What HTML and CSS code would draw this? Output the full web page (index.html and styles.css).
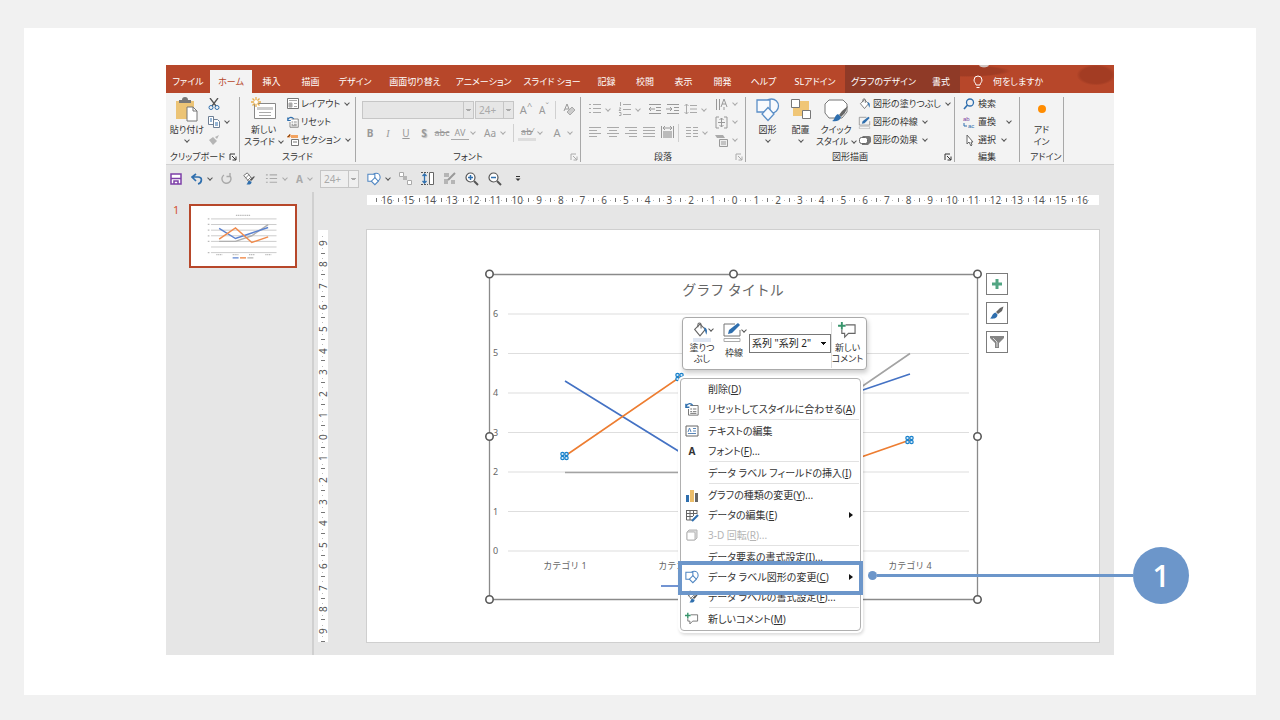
FILE: index.html
```html
<!DOCTYPE html>
<html lang="ja">
<head>
<meta charset="utf-8">
<title>データ ラベル図形の変更</title>
<link rel="stylesheet" href="styles.css">
</head>
<body>
<svg class="defs" aria-hidden="true">
  <symbol id="shapes" viewBox="0 0 24 24"><g fill="#f8fafd" stroke="#5b8fc7" stroke-width="1.3"><circle cx="15.500" cy="8" r="7"/><path d="M1 2h13v12H1z"/><path d="M12 9.500l6 6.500-6 6.500-6-6.500z"/></g></symbol>
  <symbol id="shapes-sm" viewBox="0 0 16 16"><g fill="#fff" stroke="#4f86c2" stroke-width="1.2"><circle cx="10.500" cy="6" r="4.500"/><path d="M1 2.500h8v8H1z"/><path d="M9 6.500l4 4-4 4-4-4z"/></g></symbol>
  <symbol id="fill" viewBox="0 0 16 16"><path d="M3 7l5-5 5 5-5 6z" fill="#fff" stroke="#666"/><path d="M6 5V2.500a1.500 1.500 0 013 0V6" fill="none" stroke="#666"/><path d="M12 5c3 1 3 4 2 7-1-2-1-4-2-5z" fill="#2f6fae"/></symbol>
  <symbol id="outline" viewBox="0 0 20 20"><path d="M18 8v6H2V2h11" fill="none" stroke="#777"/><path d="M6 12l1-4 9-7 2 2-8 8z" fill="#2f6fae"/><path d="M2 16.500h16v3H2z" fill="#fff" stroke="#aaa"/></symbol>
  <symbol id="brush" viewBox="0 0 16 16"><path d="M14.500 1.500L13 6 9 9 7 7l4-4z" fill="#666"/><path d="M6.500 7.500l2 2c0 4-4 4.500-7.500 4 2-1 2-5 5.500-6z" fill="#2f6fae"/></symbol>
  <symbol id="fmt" viewBox="0 0 16 16"><path d="M2 4l4-3 5 6-3 4z" fill="#fff" stroke="#666"/><path d="M4 7l4-4M6 10l4-4" stroke="#777"/><path d="M15 5l-4 5-2-1 4-4z" fill="#555"/><path d="M8 10l3 1c0 3-3 4-6 3 2-1 1-3 3-4z" fill="#2f6fae"/></symbol>
  <symbol id="comment" viewBox="0 0 20 18"><path d="M8 3h10v9h-7l-4 4v-4H4V8" fill="none" stroke="#666" stroke-width="1.200"/><path d="M4 0v8M0 4h8" stroke="#37946b" stroke-width="2"/></symbol>
  <symbol id="reset" viewBox="0 0 16 16"><path d="M6 4h9v11H4V8" fill="#fff" stroke="#666"/><path d="M6 8h2m1 0h4M6 11h2m1 0h4M6 13h7" stroke="#666"/><path d="M1 2v4h4M1 5c2-4 6-4 8-1" fill="none" stroke="#2f6fae" stroke-width="1.500"/></symbol>
  <symbol id="bullets" viewBox="0 0 14 12"><path d="M5 1.500h8M5 5.500h8M5 9.500h8M1 1.500h2M1 5.500h2M1 9.500h2" stroke="#aaa" stroke-width="1.200"/></symbol>
  <symbol id="launch" viewBox="0 0 8 8"><path d="M1 7V1h5" fill="none" stroke="currentColor"/><path d="M3 3l4 4M7 3.500V7H3.500" fill="none" stroke="currentColor"/></symbol>
</svg>

<main class="card">
<div class="app">
  <header class="tabs">
    <button>ファイル</button><button class="on">ホーム</button><button>挿入</button><button>描画</button><button>デザイン</button><button>画面切り替え</button><button>アニメーション</button><button>スライド ショー</button><button>記録</button><button>校閲</button><button>表示</button><button>開発</button><button>ヘルプ</button><button>SLアドイン</button><button class="ctx">グラフのデザイン</button><button class="ctx">書式</button>
    <button class="tell"><svg width="10" height="14" viewBox="0 0 10 14"><path d="M3 10c0-2-2-2.500-2-5a4 4 0 018 0c0 2.500-2 3-2 5zM3.500 12.500h3" fill="none" stroke="#fff"/></svg>何をしますか</button>
  </header>

  <div class="ribbon">
    <section class="group g-clip">
      <div class="body">
        <button class="big"><svg width="26" height="26" viewBox="0 0 26 26"><path d="M2 4h18v18H2z" fill="#ecc476"/><path d="M5 6V3h3a3 3 0 016 0h3v3z" fill="#777"/><path d="M13 10h6l4 4v10H13z" fill="#fff" stroke="#777"/><path d="M19 10v4h4" fill="none" stroke="#777"/></svg>貼り付け<i class="chev"></i></button>
        <div class="list">
          <button aria-label="切り取り"><svg width="12" height="12" viewBox="0 0 12 12"><path d="M2 0l6 8M10 0L4 8" stroke="#555" stroke-width="1.300"/><circle cx="3" cy="9.500" r="2" fill="none" stroke="#2f6fae"/><circle cx="9" cy="9.500" r="2" fill="none" stroke="#2f6fae"/></svg></button>
          <button aria-label="コピー"><svg width="12" height="12" viewBox="0 0 12 12"><path d="M.5.500h5v8h-5zM5.500 3.500h4l2 2v6h-6z" fill="#fff" stroke="#6d7f95"/><path d="M2 3h2M2 5h2M7 7h3M7 9h3" stroke="#2f6fae"/></svg><i class="chev"></i></button>
          <button aria-label="書式のコピー"><svg width="12" height="12" viewBox="0 0 12 12"><path d="M11 1L9 5 7 3zM1 6l4-3 4 4-4 4z" fill="#b5b5b5"/></svg></button>
        </div>
      </div>
      <h2><span>クリップボード</span><svg width="8" height="8"><use href="#launch"/></svg></h2>
    </section>

    <section class="group g-slide">
      <div class="body">
        <button class="big"><svg width="26" height="26" viewBox="0 0 26 26"><path d="M3.500 6.500h21v15h-21z" fill="#fff" stroke="#888"/><path d="M6 10h16v3H6z" fill="#ccc"/><path d="M8 15.500h12M8 18.500h12" stroke="#aaa"/><path d="M5 0v10M0 5h10M1.500 1.500l7 7M8.500 1.500l-7 7" stroke="#e9b04d" stroke-width="1.300"/><circle cx="5" cy="5" r="2" fill="#fff"/></svg>新しい<span>スライド <i class="chev"></i></span></button>
        <div class="list">
          <button><svg width="12" height="12" viewBox="0 0 12 12"><path d="M.5.500h11v10H.5z" fill="#fff" stroke="#777"/><path d="M2 2.500h8M2 5h3v4H2zM7 5.500h3M7 8.500h3" fill="#aaa" stroke="#aaa"/></svg>レイアウト<i class="chev"></i></button>
          <button><svg width="12" height="12"><use href="#reset"/></svg>リセット</button>
          <button><svg width="12" height="12" viewBox="0 0 12 12"><path d="M1 1l2 2M3 0v3H0" stroke="#e8863a"/><path d="M4 1h7v3H4z" fill="#f3a35f"/><path d="M4.500 5.500h7v6h-7z" fill="#fff" stroke="#777"/><path d="M6 8h4" stroke="#777"/></svg>セクション<i class="chev"></i></button>
        </div>
      </div>
      <h2><span>スライド</span></h2>
    </section>

    <section class="group g-font">
      <div class="body rows off">
        <div class="row">
          <select class="sel face" aria-label="フォント"><option></option></select><select class="sel size" aria-label="フォント サイズ"><option>24+</option></select>
          <button class="t11 ml">A<sup>^</sup></button><button>A<sup>ˇ</sup></button><i class="bar"></i><button aria-label="書式のクリア"><svg width="13" height="13" viewBox="0 0 13 13"><path d="M1 8l3-7 2 5M2 6h4" fill="none" stroke="#999"/><path d="M4 9l5-5 3 3-5 5z" fill="#ccc" stroke="#aaa"/></svg></button>
        </div>
        <div class="row">
          <button><b>B</b></button><button><i class="it">I</i></button><button><u>U</u></button><button class="sh"><b>S</b></button><button class="t9"><s>abc</s></button><button class="av">AV</button><i class="chev"></i><button>Aa</button><i class="chev"></i><i class="bar"></i><button class="mark"><s>ab⁄</s></button><i class="chev"></i><button class="t11">A</button><i class="chev"></i>
        </div>
      </div>
      <h2><span>フォント</span><svg class="dim" width="8" height="8"><use href="#launch"/></svg></h2>
    </section>

    <section class="group g-para">
      <div class="body">
        <div class="rows off">
          <div class="row">
            <button aria-label="箇条書き"><svg width="14" height="12"><use href="#bullets"/></svg></button><i class="chev"></i>
            <button aria-label="段落番号"><svg width="14" height="14" viewBox="0 0 14 14"><path d="M5 2.500h8M5 7.500h8M5 12.500h8M2.500 0v4M1 6h2L1 8.500h2M1 10.500h2v3H1" fill="none" stroke="#aaa"/></svg></button><i class="chev"></i>
            <button aria-label="インデントを減らす"><svg width="14" height="12" viewBox="0 0 14 12"><path d="M1 1.500h12M8 4.500h5M8 7.500h5M1 10.500h12M7 6H1M3 4L1 6l2 2" fill="none" stroke="#999"/></svg></button>
            <button aria-label="インデントを増やす"><svg width="14" height="12" viewBox="0 0 14 12"><path d="M1 1.500h12M8 4.500h5M8 7.500h5M1 10.500h12M0 6h6M4 4l2 2-2 2" fill="none" stroke="#999"/></svg></button>
            <button aria-label="行間"><svg width="14" height="12" viewBox="0 0 14 12"><path d="M6 2.500h7M6 6h7M6 9.500h7M2.500 1v10M.5 3l2-2 2 2M.5 9l2 2 2-2" fill="none" stroke="#aaa"/></svg></button><i class="chev"></i>
          </div>
          <div class="row">
            <button aria-label="左揃え"><svg width="12" height="10" viewBox="0 0 12 10"><path d="M0 .5h12M0 3.500h8M0 6.500h12M0 9.500h8" stroke="#aaa"/></svg></button>
            <button aria-label="中央揃え"><svg width="12" height="10" viewBox="0 0 12 10"><path d="M0 .5h12M2 3.500h8M0 6.500h12M2 9.500h8" stroke="#aaa"/></svg></button>
            <button aria-label="右揃え"><svg width="12" height="10" viewBox="0 0 12 10"><path d="M0 .5h12M4 3.500h8M0 6.500h12M4 9.500h8" stroke="#aaa"/></svg></button>
            <button aria-label="両端揃え"><svg width="12" height="10" viewBox="0 0 12 10"><path d="M0 .5h12M0 3.500h12M0 6.500h12M0 9.500h12" stroke="#aaa"/></svg></button>
            <button aria-label="均等割り付け"><svg width="13" height="12" viewBox="0 0 13 12"><path d="M.5 0v12M12.500 0v12M2 2h9M4 0L2 2l2 2M9 0l2 2-2 2" fill="none" stroke="#999"/><path d="M2 5h9v7H2z" fill="#bbb"/></svg></button><i class="bar"></i>
            <button aria-label="段組み"><svg width="12" height="10" viewBox="0 0 12 10"><path d="M0 .5h5M0 3.500h5M0 6.500h5M0 9.500h5M7 .5h5M7 3.500h5M7 6.500h5M7 9.500h5" stroke="#aaa"/></svg></button><i class="chev"></i>
          </div>
        </div>
        <div class="list off">
          <button aria-label="文字列の方向"><svg width="13" height="13" viewBox="0 0 13 13"><path d="M1.500 1v11M4.500 1v11M6 9l3-8 3 8M7 6h4M9 9v3" fill="none" stroke="#999"/></svg><i class="chev"></i></button>
          <button aria-label="文字の配置"><svg width="13" height="13" viewBox="0 0 13 13"><path d="M4 1H1v11h3M9 1h3v11H9M6.500 2v9M4.500 4l2-2 2 2M4.500 9l2 2 2-2M3 6.500h7" fill="none" stroke="#999"/></svg><i class="chev"></i></button>
          <button aria-label="SmartArt に変換"><svg width="13" height="13" viewBox="0 0 13 13"><path d="M0 1h8l2 3H2z" fill="#aaa"/><path d="M4.500 5.500h8v7h-8zM6 8h5M6 10h5" fill="#eee" stroke="#999"/></svg><i class="chev"></i></button>
        </div>
      </div>
      <h2><span>段落</span><svg class="dim" width="8" height="8"><use href="#launch"/></svg></h2>
    </section>

    <section class="group g-draw">
      <div class="body">
        <button class="big"><svg width="24" height="26"><use href="#shapes"/></svg>図形<i class="chev"></i></button>
        <button class="big"><svg width="24" height="26" viewBox="0 0 24 26"><path d="M4 4h16v15H4z" fill="#f0c677"/><path d="M2.500 2.500h8v8h-8zM13.500 13.500h8v8h-8z" fill="#fff" stroke="#777"/></svg>配置<i class="chev"></i></button>
        <button class="big"><svg width="26" height="26" viewBox="0 0 26 26"><path d="M6 3h14l4 4v8l-5 6H6l-4-5V7z" fill="#fff" stroke="#777"/><path d="M25 9l-3 7-4 4-2-2 3-4z" fill="#666"/><path d="M15 17l3 3c-1 4-5 5-9 4 3-1 2-5 6-7z" fill="#2f6fae"/></svg>クイック<span>スタイル <i class="chev"></i></span></button>
        <div class="list">
          <button><svg width="13" height="13"><use href="#fill"/></svg>図形の塗りつぶし<i class="chev"></i></button>
          <button><svg width="13" height="13"><use href="#outline"/></svg>図形の枠線<i class="chev"></i></button>
          <button><svg width="13" height="13" viewBox="0 0 13 13"><path d="M3 4l2-2h6a2 2 0 012 2v4l-3 3H4z" fill="#777"/><rect x="1.500" y="3.500" width="8" height="6" rx="2" fill="#fff" stroke="#666"/></svg>図形の効果<i class="chev"></i></button>
        </div>
      </div>
      <h2><span>図形描画</span><svg width="8" height="8"><use href="#launch"/></svg></h2>
    </section>

    <section class="group g-edit">
      <div class="body"><div class="list">
        <button><svg width="12" height="12" viewBox="0 0 12 12"><circle cx="7" cy="4.500" r="3.500" fill="none" stroke="#2f6fae" stroke-width="1.300"/><path d="M4.500 7L1 11" stroke="#2f6fae" stroke-width="1.600"/></svg>検索</button>
        <button><svg class="ab" width="12" height="14" viewBox="0 0 12 14"><text x="0" y="6" fill="#7a3fa0">ab</text><text x="5" y="13" fill="#2f6fae">ac</text><path d="M1 8v3h3" fill="none" stroke="#2f6fae"/></svg>置換<i class="chev wide"></i></button>
        <button><svg width="12" height="12" viewBox="0 0 12 12"><path d="M4 1v9l2-2 2 4 1-1-1-3h2z" fill="#fff" stroke="#666"/></svg>選択<i class="chev"></i></button>
      </div></div>
      <h2><span>編集</span></h2>
    </section>

    <section class="group g-add">
      <div class="body"><button class="big"><svg width="24" height="26" viewBox="0 0 24 26"><circle cx="12" cy="12" r="4" fill="#ff8c00"/></svg>アド<br>イン</button></div>
      <h2><span>アドイン</span></h2>
    </section>
  </div>

  <nav class="qat">
    <button aria-label="上書き保存"><svg width="12" height="12" viewBox="0 0 12 12"><path d="M1 1h10v10H1z" fill="#fff" stroke="#7d3fa8" stroke-width="1.500"/><path d="M1 5.500h10M4 11V8h4v3" fill="none" stroke="#7d3fa8" stroke-width="1.500"/></svg></button>
    <button aria-label="元に戻す"><svg width="12" height="12" viewBox="0 0 12 12"><path d="M5 1L1 4l4 4M1 4h6c5 0 4 6 0 7" fill="none" stroke="#2f6fae" stroke-width="1.700"/></svg><i class="chev"></i></button>
    <button aria-label="繰り返し"><svg width="12" height="12" viewBox="0 0 12 12"><path d="M3 2a4.500 4.500 0 106 1M9 0v3.500H5.500" fill="none" stroke="#aaa" stroke-width="1.400"/></svg></button>
    <button aria-label="書式"><svg width="14" height="14"><use href="#fmt"/></svg></button>
    <button class="grey" aria-label="箇条書き"><svg width="13" height="12"><use href="#bullets"/></svg><i class="chev"></i></button>
    <button class="grey"><b>A</b><i class="chev"></i></button>
    <select class="sel size" aria-label="サイズ"><option>24+</option></select>
    <button aria-label="図形"><svg width="14" height="14"><use href="#shapes-sm"/></svg><i class="chev"></i></button>
    <button aria-label="グループ化"><svg width="13" height="13" viewBox="0 0 13 13"><path d="M.5.500h4v4h-4zM8.500 8.500h4v4h-4z" fill="#fff" stroke="#aaa"/><path d="M4 4h4v4H4z" fill="#b5b5b5"/></svg></button>
    <button aria-label="高さ"><svg width="13" height="13" viewBox="0 0 13 13"><path d="M8.500.5h4v12h-4z" fill="#fff" stroke="#666"/><path d="M0 .5h7M0 12.500h7" stroke="#555" stroke-dasharray="2 1"/><path d="M3.500 2v9M1.500 4l2-2 2 2M1.500 9l2 2 2-2" fill="none" stroke="#2f6fae" stroke-width="1.300"/></svg></button>
    <button aria-label="選択の編集"><svg width="13" height="13" viewBox="0 0 13 13"><path d="M1 1h5v4H1zM1 7h4v5H1zM8 8h4v4H8z" fill="#b5b5b5"/><path d="M12 1L5 8" stroke="#999" stroke-width="2"/></svg></button>
    <button aria-label="拡大"><svg width="14" height="14" viewBox="0 0 14 14"><circle cx="5.500" cy="5.500" r="4.500" fill="#fff" stroke="#555" stroke-width="1.200"/><path d="M9 9l4 4" stroke="#555" stroke-width="2"/><path d="M3 5.500h5M5.500 3v5" stroke="#2f6fae" stroke-width="1.500"/></svg></button>
    <button aria-label="縮小"><svg width="14" height="14" viewBox="0 0 14 14"><circle cx="5.500" cy="5.500" r="4.500" fill="#fff" stroke="#555" stroke-width="1.200"/><path d="M9 9l4 4" stroke="#555" stroke-width="2"/><path d="M3 5.500h5" stroke="#2f6fae" stroke-width="1.500"/></svg></button>
    <button class="more" aria-label="カスタマイズ"><svg width="6" height="6" viewBox="0 0 6 6"><path d="M1 .5h4" stroke="#333"/><path d="M.5 2.500h5L3 5z" fill="#333"/></svg></button>
  </nav>

  <div class="work">
    <aside class="pane">
      <span class="num">1</span>
      <div class="thumb"><svg viewBox="367 230 732 412" width="100%">
        <path d="M508 314h461M508 353.500h461M508 393h461M508 432.500h461M508 472h461M508 511.500h461M508 551h461" stroke="#ccc" stroke-width="7"/>
        <g fill="none" stroke-width="10"><path d="M565 472h115l115-39.500 115-79" stroke="#b0b0b0"/><path d="M565 381l115 71 115-39 115-39" stroke="#5b82cf"/><path d="M565 456l115-79 115 103 115-40" stroke="#f08b4c"/></g>
        <path d="M683 289h101M545 566h42M660 566h42M775 566h42M890 566h42M485 314h16M485 353h16M485 393h16M485 433h16M485 472h16M485 551h16" stroke="#bbb" stroke-width="9" stroke-dasharray="9 4"/>
        <path d="M660 588h42" stroke="#6f92d6" stroke-width="10"/><path d="M712 588h42" stroke="#f08b4c" stroke-width="10"/><path d="M764 588h42" stroke="#bbb" stroke-width="10"/>
      </svg></div>
    </aside>

    <div class="editor">
      <div class="ruler across"><span>16</span><span>15</span><span>14</span><span>13</span><span>12</span><span>11</span><span>10</span><span>9</span><span>8</span><span>7</span><span>6</span><span>5</span><span>4</span><span>3</span><span>2</span><span>1</span><span>0</span><span>1</span><span>2</span><span>3</span><span>4</span><span>5</span><span>6</span><span>7</span><span>8</span><span>9</span><span>10</span><span>11</span><span>12</span><span>13</span><span>14</span><span>15</span><span>16</span></div>
      <div class="ruler down"><span>9</span><span>8</span><span>7</span><span>6</span><span>5</span><span>4</span><span>3</span><span>2</span><span>1</span><span>0</span><span>1</span><span>2</span><span>3</span><span>4</span><span>5</span><span>6</span><span>7</span><span>8</span><span>9</span></div>

      <div class="slide">
        <svg class="chart" viewBox="367 230 732 412">
          <path d="M508 314h461M508 353.500h461M508 393h461M508 432.500h461M508 472h461M508 511.500h461M508 551h461" stroke="#dedede" stroke-width="1.200"/>
          <g class="axis"><text x="493" y="317">6</text><text x="493" y="356">5</text><text x="493" y="396">4</text><text x="493" y="436">3</text><text x="493" y="475">2</text><text x="493" y="515">1</text><text x="493" y="554">0</text></g>
          <g class="axis mid"><text x="565" y="569">カテゴリ 1</text><text x="680" y="569">カテゴリ 2</text><text x="910" y="569">カテゴリ 4</text></g>
          <text class="title" x="733" y="295">グラフ タイトル</text>
          <g fill="none" stroke-width="1.600"><path d="M565 472.500h115l115-40 115-79" stroke="#a3a3a3"/><path d="M565 381l115 71 115-39 115-39M661 586h20" stroke="#4472c4"/><path d="M565 456l115-79 115 103 115-40" stroke="#ed7d31"/></g>
          <path d="M489.500 274.500h488v325h-488z" fill="none" stroke="#8a8a8a" stroke-width="1.300"/>
          <g fill="#fff" stroke="#595959" stroke-width="1.600"><circle cx="489.500" cy="274" r="3.700"/><circle cx="733.500" cy="274" r="3.700"/><circle cx="977.500" cy="274" r="3.700"/><circle cx="489.500" cy="436.500" r="3.700"/><circle cx="977.500" cy="436.500" r="3.700"/><circle cx="489.500" cy="599.500" r="3.700"/><circle cx="977.500" cy="599.500" r="3.700"/></g>
          <g fill="#d9ecfa" stroke="#1a82cc" stroke-width="1.200"><circle cx="562.500" cy="454" r="1.700"/><circle cx="566.500" cy="454" r="1.700"/><circle cx="562.500" cy="458" r="1.700"/><circle cx="566.500" cy="458" r="1.700"/><circle cx="677.500" cy="375" r="1.700"/><circle cx="681.500" cy="375" r="1.700"/><circle cx="677.500" cy="379" r="1.700"/><circle cx="681.500" cy="379" r="1.700"/><circle cx="907.500" cy="438" r="1.700"/><circle cx="911.500" cy="438" r="1.700"/><circle cx="907.500" cy="442" r="1.700"/><circle cx="911.500" cy="442" r="1.700"/></g>
        </svg>

        <div class="side">
          <button aria-label="グラフ要素"><svg width="12" height="12" viewBox="0 0 12 12"><path d="M6 1v10M1 6h10" stroke="#52a583" stroke-width="3"/></svg></button>
          <button aria-label="グラフ スタイル"><svg width="16" height="16"><use href="#brush"/></svg></button>
          <button aria-label="グラフ フィルター"><svg width="16" height="16" viewBox="0 0 16 16"><path d="M1 2h14v2l-5 5v5H6V9L1 4z" fill="#858585"/><path d="M4 4l4 4v5" fill="none" stroke="#ddd"/></svg></button>
        </div>

        <div class="mini">
          <button><span class="ic"><svg width="18" height="17"><use href="#fill"/></svg><i class="chev"></i></span><i class="swatch"></i>塗りつ<br>ぶし</button>
          <button><span class="ic two"><svg width="20" height="20"><use href="#outline"/></svg><i class="chev"></i></span>枠線</button>
          <select aria-label="グラフ要素"><option>系列 "系列 2"</option></select>
          <button class="new"><span class="ic"><svg width="19" height="17"><use href="#comment"/></svg></span><i class="swatch clear"></i>新しい<br>コメント</button>
        </div>

        <div class="menu" role="menu">
          <button role="menuitem"><i></i>削除(<u>D</u>)</button>
          <button role="menuitem"><svg width="14" height="14"><use href="#reset"/></svg>リセットしてスタイルに合わせる(<u>A</u>)</button>
          <hr>
          <button role="menuitem"><svg width="14" height="12" viewBox="0 0 14 12"><path d="M1 1h12v10H1z" fill="#fff" stroke="#666"/><path d="M3 7l1.500-4L6 7M8 3.500h3M8 6h3M3 8.500h8" fill="none" stroke="#5a86b8"/></svg>テキストの編集</button>
          <button role="menuitem"><b>A</b>フォント(<u>F</u>)...</button>
          <hr>
          <button role="menuitem"><i></i>データ ラベル フィールドの挿入(<u>I</u>)</button>
          <hr>
          <button role="menuitem"><svg width="14" height="13" viewBox="0 0 14 13"><path d="M1 6h3v7H1z" fill="#2f6fae"/><path d="M5 1h4v12H5z" fill="#ebbd6a"/><path d="M10 4h3v9h-3z" fill="#666"/></svg>グラフの種類の変更(<u>Y</u>)...</button>
          <button role="menuitem"><svg width="14" height="13" viewBox="0 0 14 13"><path d="M1 1.500h11M1.500 1v10H7M1 4.500h11M1 7.500h7M5 1v10M8.500 1v6M12 1v4" fill="none" stroke="#666"/><path d="M13 6l-6 6" stroke="#2f6fae" stroke-width="2.200"/></svg>データの編集(<u>E</u>)<em class="arrow split"></em></button>
          <button role="menuitem" disabled><svg width="14" height="14" viewBox="0 0 14 14"><path d="M2 4l2-2h8v8l-2 2H2z" fill="#ddd" stroke="#b5b5b5"/><rect x="2" y="4" width="8" height="8" rx="1" fill="#fff" stroke="#b5b5b5"/></svg>3-D 回転(<u>R</u>)...</button>
          <hr>
          <button role="menuitem"><i></i>データ要素の書式設定(<u>I</u>)...</button>
          <button role="menuitem"><svg width="14" height="14"><use href="#shapes-sm"/></svg>データ ラベル図形の変更(<u>C</u>)<em class="arrow"></em></button>
          <button role="menuitem"><svg width="14" height="14"><use href="#fmt"/></svg>データ ラベルの書式設定(<u>F</u>)...</button>
          <hr>
          <button role="menuitem"><svg width="14" height="14"><use href="#comment"/></svg>新しいコメント(<u>M</u>)</button>
        </div>
        <div class="focus"></div>
        <div class="callout"><span>1</span></div>
      </div>
    </div>
  </div>
</div>
</main>
</body>
</html>
```
FILE: styles.css
```css
* { box-sizing: border-box; }
body {
  margin: 0; min-height: 100vh; padding: 28px 24px 25px; display: flex;
  background: #f1f1f1; color: #333;
  font: 10px/12px "Noto Sans", "Noto Sans CJK JP", sans-serif;
  font-feature-settings: "palt";
}
.defs { position: absolute; width: 0; height: 0; }
button { font: inherit; font-feature-settings: inherit; color: inherit; background: none; border: 0; padding: 0; margin: 0; white-space: nowrap; }
svg { flex: none; }
i, em { font-style: normal; }
.card { flex: 1; display: flex; background: #fff; padding: 37px 142px 40px; }
.app { flex: 1; display: flex; flex-direction: column; background: #e6e6e6; }

.tabs {
  display: grid; height: 28px; color: #fff; font-size: 9px;
  grid-template-columns: 44px 42px 39px 39px 50px 70px 67px 70px 39px 38px 39px 39px 43px 60px 77px 38px 1fr;
  background:
    radial-gradient(ellipse 8px 4px at 818px 0, #d0c4c1 50%, transparent 70%),
    radial-gradient(ellipse 60px 8px at 800px 6px, #a03c24 60%, transparent 75%),
    radial-gradient(ellipse 26px 14px at 930px 10px, #a33c23 60%, transparent 75%),
    #b7472a;
}
.tabs button { padding-top: 6px; }
.tabs .on { background: #f3f3f3; color: #b7472a; margin-top: 5px; padding-top: 1px; }
.tabs .ctx { background: #8f3a27; }
.tabs .tell { display: flex; align-items: center; gap: 10px; padding-left: 13px; }

.ribbon { display: flex; height: 72px; padding: 4px 0 2px; background: #f3f3f3; border-bottom: 1px solid #d2d2d2; }
.group { display: flex; flex-direction: column; border-right: 1px solid #a8a8a8; }
.body { flex: 1; display: flex; }
.group h2 { display: grid; grid-template-columns: 10px 1fr 10px; align-items: center; margin: 0; font-size: 9px; font-weight: 400; line-height: 10px; text-align: center; white-space: nowrap; }
.group h2 span { grid-column: 2; justify-self: center; }
.dim { color: #aaa; }
.g-clip { width: 74px; } .g-slide { width: 116px; } .g-font { width: 225px; }
.g-para { width: 165px; } .g-draw { width: 209px; } .g-edit { width: 65px; } .g-add { width: 44px; }
.g-clip h2 { grid-template-columns: 0 1fr 10px; }
.big { display: flex; flex-direction: column; align-items: center; width: 36px; font-size: 9px; }
.big > svg { margin-bottom: 1px; }
.g-clip .big { width: 42px; }
.g-slide .big { width: 47px; }
.g-add .big { width: 43px; }
.big > .chev { margin-top: 2px; }
.big span { display: flex; align-items: center; gap: 4px; }
.g-draw .body { padding-left: 5px; }
.g-draw .big { width: 33px; }
.g-draw .big:nth-child(3) { width: 38px; }
.list { display: flex; flex-direction: column; gap: 4px; }
.list button { height: 14px; display: flex; align-items: center; gap: 2px; font-size: 9px; }
.list .chev { margin-left: 3px; }
.g-draw .list { padding-left: 3px; }
.g-edit .list { padding-left: 8px; }
.g-edit .list button { gap: 3px; }
.ab { font: 6px "Liberation Sans", sans-serif; overflow: visible; }
.chev { display: inline-block; flex: none; width: 4px; height: 4px; border: solid #555; border-width: 0 1px 1px 0; transform: rotate(45deg); margin-bottom: 2px; }
.list .wide { margin-left: 8px; }
.off { color: #999; }
.off .chev, .grey .chev { border-color: #aaa; }
.rows { display: flex; flex-direction: column; gap: 5px; padding: 4px 0 0 5px; }
.row { display: flex; align-items: center; height: 18px; }
.row button { width: 18px; }
.row .chev { margin: 0 6px 2px 2px; }
.row sup { line-height: 0; }
.row .bar { width: 1px; height: 18px; background: #d0d0d0; margin: 0 4px 0 2px; }
.it { font-style: italic; font-family: "Liberation Serif", serif; }
.sh { text-shadow: 1px 1px 1px #bbb; }
.t9, .av, .mark { font-size: 9px; }
.t11 { font-size: 11px; }
.row .ml { margin-left: 3px; }
.av { border-bottom: 1px solid #aaa; }
.mark { border-bottom: 3px solid #ddd; }
.g-para .list { padding-left: 2px; }

.sel {
  appearance: none; font: inherit; color: #aaa; height: 18px; padding: 0 3px; border: 1px solid #c6c6c6; border-radius: 0;
  background:
    linear-gradient(#c6c6c6, #c6c6c6) right 9px top / 1px 100% no-repeat,
    linear-gradient(#aaa, #aaa) right 2px top 7px / 5px 1px no-repeat,
    linear-gradient(#aaa, #aaa) right 3px top 8px / 3px 1px no-repeat,
    #e6e6e6;
}
.face { width: 112px; margin: 0 1px; }
.size { width: 39px; }

.qat { display: flex; align-items: center; height: 27px; padding-left: 4px; gap: 9px; }
.qat button { display: flex; align-items: center; gap: 5px; }
.qat .size { background-color: #efefef; margin: 0 -1px; }
.qat .more { margin-left: 4px; }
.grey { color: #aaa; }

.work { flex: 1; display: flex; }
.pane { width: 148px; border-right: 2px solid #d0d0d0; padding: 12px 15px 0 7px; display: flex; align-items: flex-start; gap: 10px; }
.num { color: #d35230; font-size: 11px; width: 6px; }
.thumb { flex: 1; border: 2px solid #b7472a; background: #fff; display: flex; height: 64px; align-items: center; }

.editor { flex: 1; display: grid; grid-template: 10px 1fr / 10px 1fr; gap: 25px 39px; padding: 3px 15px 13px 4px; }
.ruler { display: flex; background: #fff; color: #555; font-size: 10px; line-height: 10px; }
.ruler span { flex: 1; text-align: center; }
.across { grid-column: 2; padding: 0 6px 0 9px; }
.across span {
  background: linear-gradient(#777, #777) left center / 1px 4px no-repeat, linear-gradient(#bbb, #bbb) 22% center / 1px 1px no-repeat, linear-gradient(#bbb, #bbb) 80% center / 1px 1px no-repeat;
}
.down { writing-mode: vertical-rl; transform: rotate(180deg); padding-bottom: 2px; }
.down span {
  background: linear-gradient(#777, #777) center top / 4px 1px no-repeat, linear-gradient(#bbb, #bbb) center 22% / 1px 1px no-repeat, linear-gradient(#bbb, #bbb) center 80% / 1px 1px no-repeat;
}
.slide { position: relative; background: #fff; box-shadow: 0 0 0 1px #cfcfcf; }
.chart { display: block; width: 100%; }
.axis { font-size: 9px; fill: #666; font-feature-settings: normal; }
.mid, .title { text-anchor: middle; }
.title { font-size: 14px; fill: #666; font-feature-settings: normal; }

.side { position: absolute; left: 619px; top: 43px; display: grid; gap: 7px; }
.side button { width: 22px; height: 22px; border: 1px solid #7c7c7c; background: #fff; display: grid; place-items: center; }

.mini {
  position: absolute; left: 315px; top: 87px; width: 185px; height: 53px; padding: 4px 2px 0 3px; display: flex;
  background: #fff; border: 1px solid #aaa; border-radius: 4px; box-shadow: 1px 3px 5px #0003; font-size: 9px; line-height: 11px;
}
.mini button { width: 32px; display: flex; flex-direction: column; align-items: center; }
.mini .ic { display: flex; align-items: center; height: 16px; }
.mini .two { height: 25px; align-items: flex-start; }
.mini .two .chev { margin-top: 6px; }
.mini .swatch { width: 18px; height: 4px; background: #dfe6f2; }
.mini .clear { background: none; }
.mini select {
  appearance: none; align-self: flex-start; width: 82px; height: 19px; margin: 12px 0 0 -1px; padding: 0 2px;
  font: inherit; font-size: 10px; color: #222; border: 1px solid #777; border-radius: 0;
  background: linear-gradient(#111, #111) right 4px top 7px / 5px 1px no-repeat, linear-gradient(#111, #111) right 5px top 8px / 3px 1px no-repeat, linear-gradient(#111, #111) right 6px top 9px / 1px 1px no-repeat, #fff;
}
.mini .new { border-left: 1px solid #ddd; height: 46px; justify-content: flex-start; }
.mini button:first-child { justify-content: flex-start; }

.menu {
  position: absolute; left: 313px; top: 148px; width: 181px; padding-bottom: 1px; display: flex; flex-direction: column;
  background: #fff; border: 1px solid #b0b0b0; border-radius: 4px; box-shadow: 0 0 0 2px #fff, 1px 2px 3px 2px #0002; font-size: 10px;
}
.menu button { height: 20px; display: flex; align-items: center; }
.menu button > :first-child { width: 14px; margin: 0 9px 0 4px; flex: none; text-align: center; }
.menu button:disabled { color: #b5b5b5; }
.menu hr { width: 150px; height: 1px; margin: 0 1px 1px auto; border: 0; background: #e2e2e2; }
.menu .arrow { margin: 0 7px 0 auto; border: solid transparent; border-width: 3px 0 3px 4px; border-left-color: #111; }
.focus { position: absolute; left: 311px; top: 331px; width: 185px; height: 34px; border: 4px solid #6c96ca; }

.callout { position: absolute; left: 501px; top: 316px; width: 321px; height: 58px; display: flex; align-items: center; }
.callout::before { content: ""; width: 9px; height: 9px; border-radius: 50%; background: #6c96ca; }
.callout::after { content: ""; order: 1; flex: 1; height: 3px; background: #6c96ca; }
.callout span { order: 2; width: 56px; height: 57px; border-radius: 50%; background: #6c96ca; color: #fff; font: 600 30px/58px "Open Sans", sans-serif; text-align: center; }
```
